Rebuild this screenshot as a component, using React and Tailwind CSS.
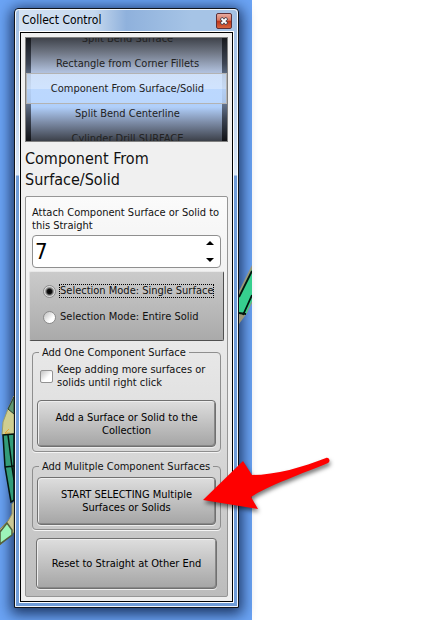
import { useState } from 'react'

const modes = ['Split Bend Surface', 'Rectangle from Corner Fillets', 'Component From Surface/Solid', 'Split Bend Centerline', 'Cylinder Drill SURFACE']

const App = () => {
    return (
        <main className="grid min-h-screen grid-cols-[252fr_181fr] bg-white font-['DejaVu_Sans_Condensed','DejaVu_Sans',sans-serif] text-[11px] leading-[13px] text-[#111]">
            <div className="relative bg-[#6ba4f5] pt-2 pr-[13px] pb-3 pl-[14px]">
                <CollectWindow />
                <Model />
            </div>
        </main>
    )
}

// the part of the 3D model that shows on both sides of the window
const Model = () => {
    return (
        <>
            <svg className="absolute top-[380px] left-0" width="14" height="180" viewBox="0 0 14 180" aria-hidden="true">
                <path d="M14 16 L8 29 L3 42 L2 55 L14 56Z" fill="#cfce91" stroke="#9a9c68" />
                <path d="M14 17 L8 29 L14 34Z" fill="#5f9873" stroke="#263b2c" />
                <path d="M5 53 l4 -4 M5 53 l4 4 M5 53 h5" stroke="#e3a73a" fill="none" />
                <path d="M14 54 L3 55 L5 87 L11 122 L14 120Z" fill="#339c79" stroke="#051510" strokeWidth="1.5" />
                <path d="M8 55 L12 87 L14 100 M5 87 L14 86" stroke="#051510" strokeWidth="1.5" fill="none" />
                <path d="M14 122 L12 124 L12 134 L8 141 L0 149 V165 L14 152Z" fill="#cbc795" stroke="#918d60" />
                <path d="M0 152 L7 143 L12 150 L12 155 L0 164Z" fill="#9df5b9" stroke="#53603c" strokeWidth="1.5" />
            </svg>
            <svg className="absolute top-[255px] right-0" width="13" height="71" viewBox="0 0 13 71" aria-hidden="true">
                <path d="M13 10 L0 36 V69 L8 58 L13 48Z" fill="#9b9678" />
                <path d="M13 14 L0 41 V58 L7 59 L13 46Z" fill="#36cf8e" />
                <path d="M13 16 L0 42 M0 58 L7 59 M4 60 L13 40" stroke="#03150d" strokeWidth="1.8" fill="none" />
            </svg>
        </>
    )
}

const CollectWindow = () => {
    return (
        <section className="rounded-t-sm border border-[#10141c] bg-[linear-gradient(to_bottom,#a3c0e3_0,#a9c5e8_50px,#dce8f6_166px,#6f9cd8_167px)] shadow-[0_3px_14px_3px_#06183ccc]">
            <div className="rounded-t-sm border border-white/90 px-[3px] pb-[3px]">
                <header className="flex h-[21px] items-center justify-between bg-[linear-gradient(to_right,#d4e2f3_0,#c5d8ee_35%,#8fb1dc_50%,#a6c4e6_80%)] pr-[2px] pl-[3px]">
                    <h1 className="text-[12px] text-black">Collect Control</h1>
                    <button aria-label="Close" className="flex h-4 w-4 items-center justify-center rounded-xs border border-[#5d3038] bg-[linear-gradient(#e8aca0,#d8765f_45%,#bd3419_50%,#d8653f)]">
                        <svg width="8" height="8" viewBox="0 0 8 8" aria-hidden="true">
                            <path d="M1 1 L7 7 M7 1 L1 7" stroke="#454550" strokeWidth="3.5" />
                            <path d="M1.5 1.5 L6.5 6.5 M6.5 1.5 L1.5 6.5" stroke="#fff" strokeWidth="1.8" />
                        </svg>
                    </button>
                </header>
                <div className="border border-white">
                    <div className="border border-black bg-[#f0f0f0] p-1">
                        <ModeWheel />
                        <h2 className="mt-[6px] mb-[6px] text-[16px] leading-[21px]">Component From<br />Surface/Solid</h2>
                        <Options />
                    </div>
                </div>
            </div>
        </section>
    )
}

const ModeWheel = () => {
    return (
        <div className="relative h-[105px] overflow-hidden border border-[#808080] bg-[linear-gradient(#3f434b_0,#6f7684_14%,#b0c0dc_33%,#b5d2fb_50%,#b0cffa_67%,#7d8ca7_82%,#3c4049_100%)]">
            <div className="absolute inset-y-0 left-0 w-[5px] bg-[linear-gradient(#17191d,#3c4453_25%,#8ba3c8_50%,#3c4453_78%,#111216)]" />
            <div className="absolute inset-y-0 right-0 w-[5px] bg-[linear-gradient(#17191d,#3c4453_25%,#8ba3c8_50%,#3c4453_78%,#111216)]" />
            <div className="absolute inset-x-0 top-[35px] h-[31px] border border-[#b3b3b3] bg-[linear-gradient(#d7e8ffcc_50%,#bdd9ffcc_50%)]" />
            <ul role="listbox" aria-label="Command" className="relative flex h-full flex-col justify-center pb-[2px] pl-[2px] text-center text-[#222]">
                {modes.map((mode) => (
                    <li key={mode} role="option" aria-selected={mode === modes[2]} className="h-[25px] shrink-0 leading-[25px]">{mode}</li>
                ))}
            </ul>
        </div>
    )
}

const Options = () => {
    const [straight, setStraight] = useState(7)
    const [selection, setSelection] = useState('single')

    return (
        <div className="rounded-xs border border-[#969696] bg-linear-to-b from-[#fbfbfb] via-[#e2e2e2] to-[#bcbcbc] px-[3px] pt-[9px] pb-[7px]">
            <label htmlFor="straight" className="block pl-[3px]">Attach Component Surface or Solid to<br />this Straight</label>
            <div className="mx-[3px] mt-[3px] flex h-[33px] rounded-sm border border-[#8f8f8f] bg-white">
                <input
                    id="straight"
                    inputMode="numeric"
                    value={straight}
                    onChange={(e) => setStraight(Number(e.target.value) || 0)}
                    className="w-full min-w-0 pl-[2px] text-[22px] leading-[26px] text-black outline-none"
                />
                <div className="flex w-5 shrink-0 flex-col">
                    <button aria-label="Increase" onClick={() => setStraight(straight + 1)} className="flex flex-1 items-center justify-center">
                        <svg width="8" height="5" viewBox="0 0 8 5" aria-hidden="true"><path d="M4 0 L8 4 H0Z" /></svg>
                    </button>
                    <button aria-label="Decrease" onClick={() => setStraight(straight - 1)} className="flex flex-1 items-center justify-center">
                        <svg width="8" height="5" viewBox="0 0 8 5" aria-hidden="true"><path d="M4 5 L8 1 H0Z" /></svg>
                    </button>
                </div>
            </div>
            <div className="mt-[3px] flex h-[70px] flex-col gap-3 rounded-xs border border-t-[#e8e8e8] border-r-[#505050] border-b-[#505050] border-l-[#e0e0e0] bg-linear-to-b from-[#cbcbcb] to-[#aaa] pt-3 pl-[13px]">
                <ModeRadio label="Selection Mode: Single Surface" checked={selection === 'single'} onChange={() => setSelection('single')} />
                <ModeRadio label="Selection Mode: Entire Solid" checked={selection === 'entire'} onChange={() => setSelection('entire')} />
            </div>
            <Group title="Add One Component Surface">
                <label className="mt-1 mb-1 flex items-center gap-1 pl-[3px]">
                    <input type="checkbox" className="h-[13px] w-[13px] shrink-0 appearance-none rounded-xs border border-[#929292] bg-[linear-gradient(135deg,#c4c4c4,#fff_60%)] checked:bg-[#555]" />
                    <span>Keep adding more surfaces or<br />solids until right click</span>
                </label>
                <PushButton className="mt-[11px] h-[47px]">Add a Surface or Solid to the<br />Collection</PushButton>
            </Group>
            <Group title="Add Mulitple Component Surfaces">
                <div className="relative mt-1">
                    <PushButton className="h-12">START SELECTING Multiple<br />Surfaces or Solids</PushButton>
                    <Arrow />
                </div>
            </Group>
            <div className="mt-[7px] px-[7px]">
                <PushButton className="h-[51px]">Reset to Straight at Other End</PushButton>
            </div>
        </div>
    )
}

const ModeRadio = ({ label, checked, onChange }) => {
    return (
        <label className="flex items-center gap-[3px]">
            <input
                type="radio"
                name="selection"
                checked={checked}
                onChange={onChange}
                className="h-[13px] w-[13px] shrink-0 appearance-none rounded-full border border-[#8b8b8b] bg-[linear-gradient(135deg,#bdbdbd,#fff_65%)] checked:bg-[radial-gradient(circle,#000_0,#111_30%,#777_45%,#ddd_65%)]"
            />
            <span className={checked ? 'border border-dotted border-black leading-3' : 'border border-transparent leading-3'}>{label}</span>
        </label>
    )
}

const Group = ({ title, children }) => {
    return (
        <fieldset className="mx-[3px] mt-[5px] mb-2 rounded-sm border border-[#8e8e8e] px-1 pb-1 shadow-[0_1px_0_#f4f4f4]">
            <legend className="ml-[2px] px-[3px]">{title}</legend>
            {children}
        </fieldset>
    )
}

const PushButton = ({ className, children }) => {
    return (
        <button className={`block w-full rounded-sm border border-[#707070] bg-linear-to-b from-[#dedede] to-[#a5a5a5] text-center text-black shadow-[inset_1px_1px_0_#eee,inset_-1px_-1px_0_#888,0_1px_0_#eee] ${className}`}>
            {children}
        </button>
    )
}

const Arrow = () => {
    return (
        <svg className="pointer-events-none absolute top-[-22px] left-[166px] z-10 overflow-visible drop-shadow-[1px_3px_2px_#0008]" width="130" height="60" viewBox="0 0 130 60" aria-hidden="true">
            <path d="M0 45 L40 6 L49 20 C73 20 100 12 123 3 C126 2 128 6 125 8 C101 18 64 31 48 42 L55 54Z" fill="#fe0000" />
        </svg>
    )
}

export default App
